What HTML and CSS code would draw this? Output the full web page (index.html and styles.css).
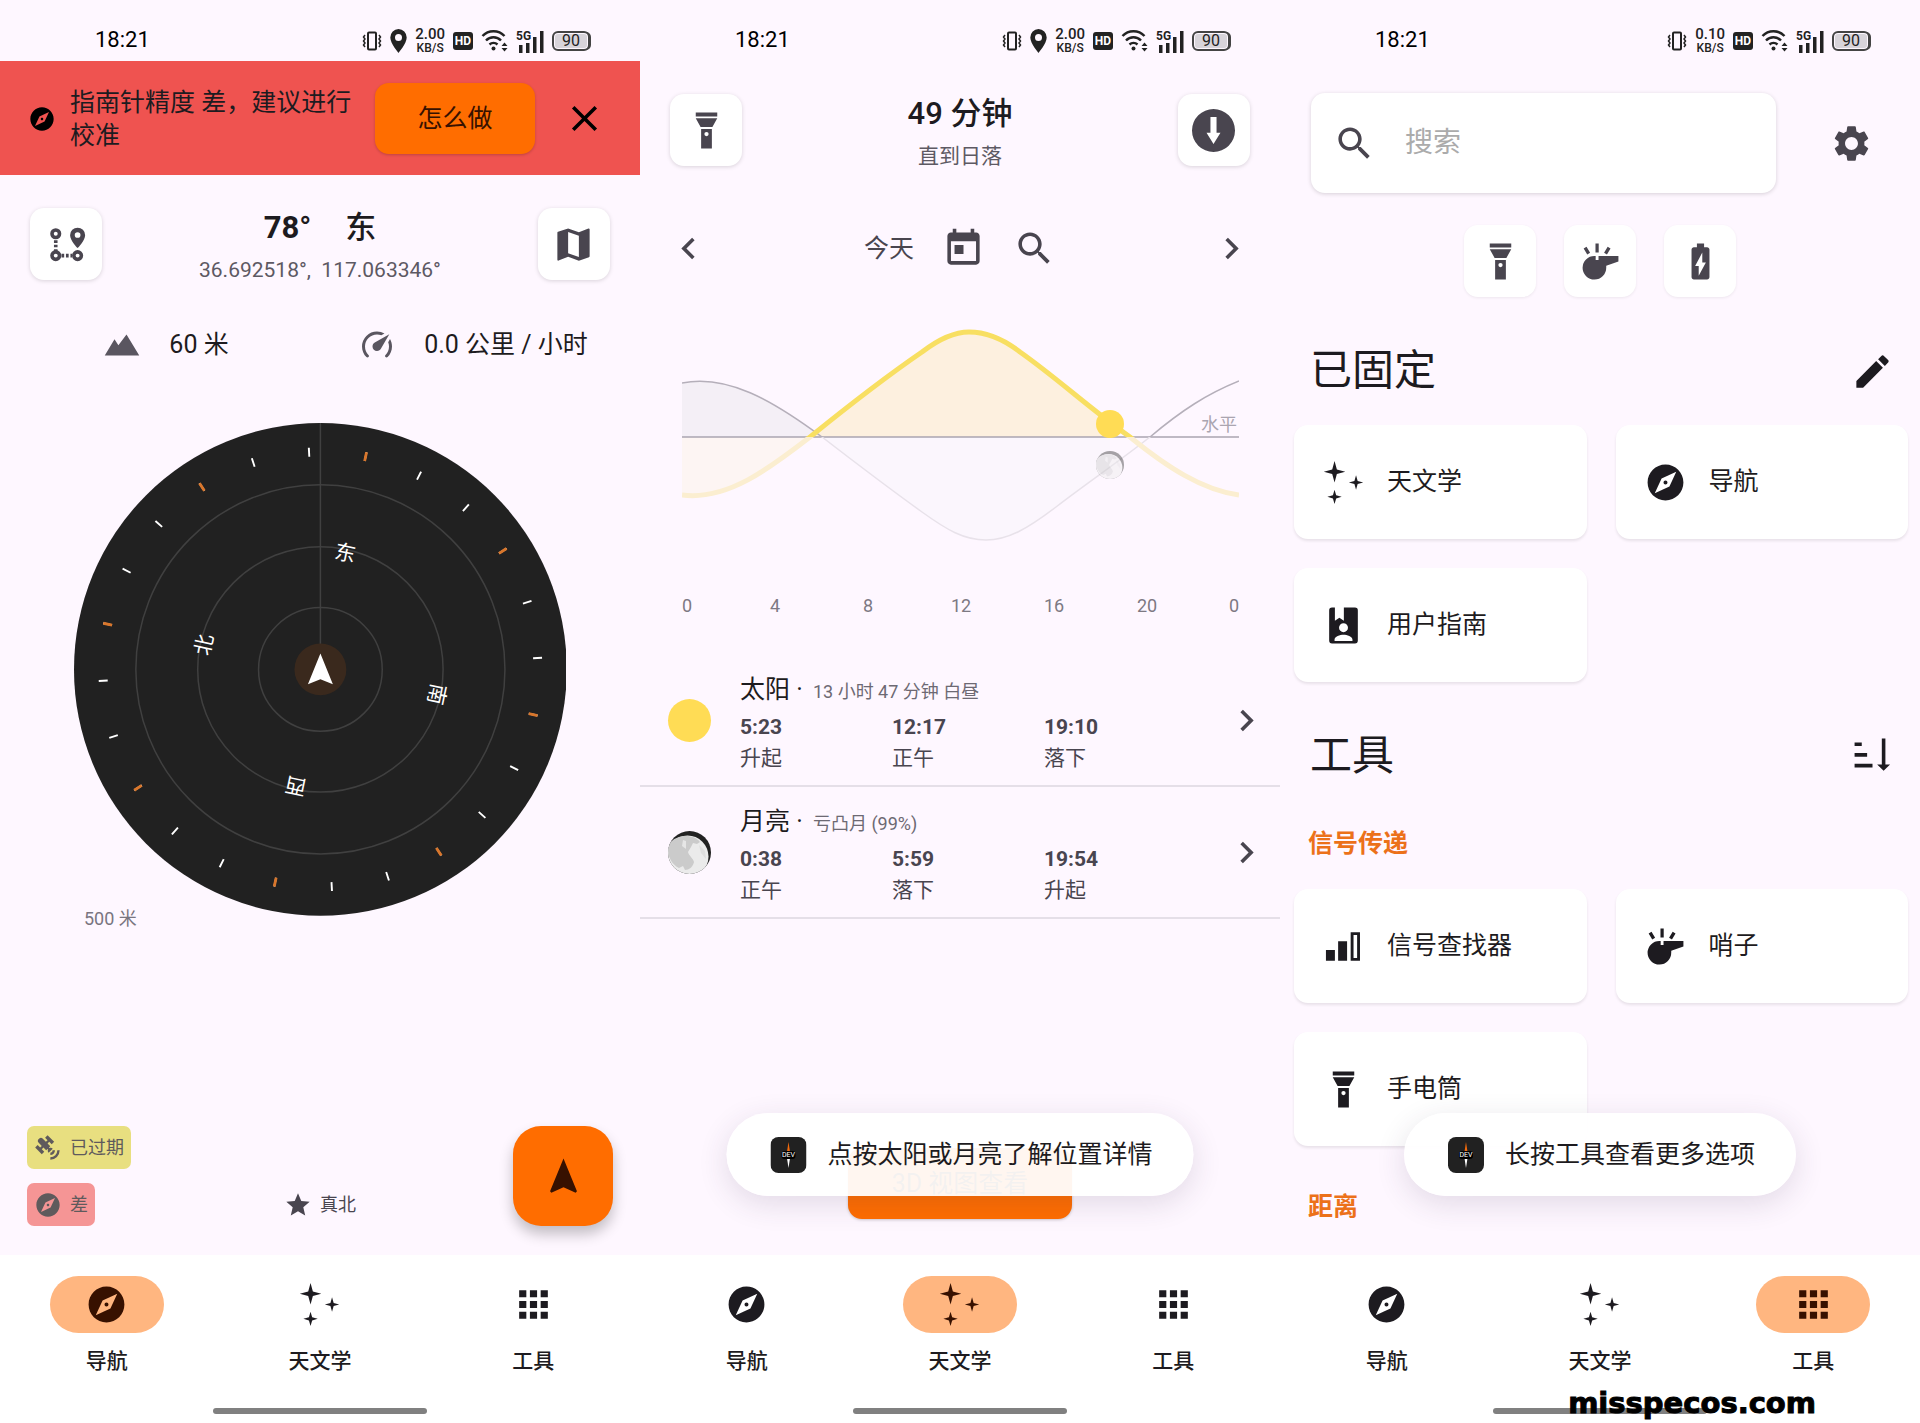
FILE: index.html
```html
<!DOCTYPE html>
<html lang="zh-CN">
<head>
    <meta charset="UTF-8">
    <title>导航</title>
    <link rel="stylesheet" href="styles.css">
</head>
<body>
<!-- 图标 -->
<svg class="sprite" aria-hidden="true">
    <symbol id="i-compass" viewBox="0 0 24 24"><path d="M12 10.9c-.61 0-1.1.49-1.1 1.1s.49 1.1 1.1 1.1c.61 0 1.1-.49 1.1-1.1s-.49-1.1-1.1-1.1zM12 2C6.48 2 2 6.48 2 12s4.48 10 10 10 10-4.48 10-10S17.52 2 12 2zm2.19 12.19L6 18l3.81-8.19L18 6l-3.81 8.19z"/></symbol>
    <symbol id="i-stars" viewBox="0 0 24 24"><path d="M7 0l1.3 4.7L13 6 8.3 7.3 7 12 5.7 7.3 1 6l4.7-1.3zM19 8l.9 3.1L23 12l-3.1.9L19 16l-.9-3.1L15 12l3.1-.9zM7 16l.9 3.1L11 20l-3.1.9L7 24l-.9-3.1L3 20l3.1-.9z"/></symbol>
    <symbol id="i-apps" viewBox="0 0 24 24"><path d="M4 8h4V4H4v4zm6 12h4v-4h-4v4zm-6 0h4v-4H4v4zm0-6h4v-4H4v4zm6 0h4v-4h-4v4zm6-10v4h4V4h-4zm-6 4h4V4h-4v4zm6 6h4v-4h-4v4zm0 6h4v-4h-4v4z"/></symbol>
    <symbol id="i-close" viewBox="0 0 24 24"><path d="M19 6.41L17.59 5 12 10.59 6.41 5 5 6.41 10.59 12 5 17.59 6.41 19 12 13.41 17.59 19 19 17.59 13.41 12z"/></symbol>
    <symbol id="i-map" viewBox="0 0 24 24"><path d="M20.5 3l-.16.03L15 5.1 9 3 3.36 4.9c-.21.07-.36.25-.36.48V20.5c0 .28.22.5.5.5l.16-.03L9 18.9l6 2.1 5.64-1.9c.21-.07.36-.25.36-.48V3.5c0-.28-.22-.5-.5-.5zM15 19l-6-2.11V5l6 2.11V19z"/></symbol>
    <symbol id="i-route" viewBox="0 0 24 24">
        <g fill="none" stroke="currentColor" stroke-width="2"><circle cx="6" cy="6" r="2.1"/><circle cx="6" cy="18.2" r="2.1"/><circle cx="18.2" cy="18.2" r="2.1"/><path d="M6 9.6v6M9.2 18.2h6" stroke-dasharray="1.5 1"/></g>
        <path fill-rule="evenodd" d="M18.2 2.6a4.2 4.2 0 0 0-4.2 4.2c0 3 4.2 7.2 4.2 7.2s4.2-4.2 4.2-7.2a4.2 4.2 0 0 0-4.2-4.2zm0 5.7a1.6 1.6 0 1 1 0-3.2 1.6 1.6 0 0 1 0 3.2z"/>
    </symbol>
    <symbol id="i-mountain" viewBox="0 0 24 24"><path d="M.5 19L7 8.2l2.6 3.9L15 5l8.5 14z"/></symbol>
    <symbol id="i-speed" viewBox="0 0 24 24"><path d="M12,16A3,3 0 0,1 9,13C9,11.88 9.61,10.9 10.5,10.39L20.21,4.77L14.68,14.35C14.18,15.33 13.17,16 12,16M12,3C13.81,3 15.5,3.5 16.97,4.32L14.87,5.53C14,5.19 13,5 12,5A8,8 0 0,0 4,13C4,15.21 4.89,17.21 6.34,18.65H6.35C6.74,19.04 6.74,19.67 6.35,20.06C5.96,20.45 5.32,20.45 4.93,20.07V20.07C3.12,18.26 2,15.76 2,13A10,10 0 0,1 12,3M22,13C22,15.76 20.88,18.26 19.07,20.07V20.07C18.68,20.45 18.05,20.45 17.66,20.06C17.27,19.67 17.27,19.04 17.66,18.65V18.65C19.11,17.2 20,15.21 20,13C20,12 19.81,11 19.46,10.1L20.67,8C21.5,9.5 22,11.18 22,13Z"/></symbol>
    <symbol id="i-satellite" viewBox="0 0 24 24"><path d="M11.62,1L17.28,6.67L15.16,8.79L13.04,6.67L11.62,8.09L13.95,10.41L12.79,11.58L13.24,12.04C14.17,11.61 15.31,11.77 16.07,12.54L12.54,16.07C11.77,15.31 11.61,14.17 12.04,13.24L11.58,12.79L10.41,13.95L8.09,11.62L6.67,13.04L8.79,15.16L6.67,17.28L1,11.62L3.14,9.5L5.26,11.62L6.67,10.21L3.84,7.38C3.06,6.6 3.06,5.33 3.84,4.55L4.55,3.84C5.33,3.06 6.6,3.06 7.38,3.84L10.21,6.67L11.62,5.26L9.5,3.14L11.62,1M18,14A4,4 0 0,1 14,18V16A2,2 0 0,0 16,14H18M22,14A8,8 0 0,1 14,22V20A6,6 0 0,0 20,14H22Z"/></symbol>
    <symbol id="i-star" viewBox="0 0 24 24"><path d="M12 17.27L18.18 21l-1.64-7.03L22 9.24l-7.19-.61L12 2 9.19 8.63 2 9.24l5.46 4.73L5.82 21z"/></symbol>
    <symbol id="i-arrow" viewBox="0 0 24 24"><path d="M12 2L4.5 20.29l.71.71L12 18l6.79 3 .71-.71z"/></symbol>
    <symbol id="i-torch" viewBox="0 0 24 24"><path fill-rule="evenodd" d="M6 2h12v2.200H6zM6 5.100h12L15.300 10H8.700zM9 11.200h6V22H9zm3 1.600a1.200 1.200 0 1 0 0 2.400 1.200 1.200 0 0 0 0-2.400z"/></symbol>
    <symbol id="i-down" viewBox="0 0 24 24"><path fill-rule="evenodd" d="M12 0a12 12 0 1 0 0 24 12 12 0 0 0 0-24zm-1.700 4.500h3.400v8.800h2.200L12 19.500l-3.900-6.200h2.200z"/></symbol>
    <symbol id="i-prev" viewBox="0 0 24 24"><path d="M15.41 7.41L14 6l-6 6 6 6 1.41-1.41L10.83 12z"/></symbol>
    <symbol id="i-next" viewBox="0 0 24 24"><path d="M10 6L8.59 7.41 13.17 12l-4.58 4.59L10 18l6-6z"/></symbol>
    <symbol id="i-today" viewBox="0 0 24 24"><path d="M19 3h-1V1h-2v2H8V1H6v2H5c-1.11 0-1.99.9-1.99 2L3 19c0 1.1.89 2 2 2h14c1.1 0 2-.9 2-2V5c0-1.1-.9-2-2-2zm0 16H5V8h14v11zM7 10h5v5H7v-5z"/></symbol>
    <symbol id="i-search" viewBox="0 0 24 24"><path d="M15.5 14h-.79l-.28-.27C15.41 12.59 16 11.11 16 9.5 16 5.91 13.09 3 9.5 3S3 5.91 3 9.5 5.91 16 9.5 16c1.61 0 3.09-.59 4.23-1.57l.27.28v.79l5 4.99L20.49 19l-4.99-5zm-6 0C7.01 14 5 11.99 5 9.5S7.01 5 9.5 5 14 7.01 14 9.5 11.99 14 9.5 14z"/></symbol>
    <symbol id="i-settings" viewBox="0 0 24 24"><path d="M19.14 12.94c.04-.3.06-.61.06-.94 0-.32-.02-.64-.07-.94l2.03-1.58c.18-.14.23-.41.12-.61l-1.92-3.32c-.12-.22-.37-.29-.59-.22l-2.39.96c-.5-.38-1.03-.7-1.62-.94l-.36-2.54c-.04-.24-.24-.41-.48-.41h-3.84c-.24 0-.43.17-.47.41l-.36 2.54c-.59.24-1.13.57-1.62.94l-2.39-.96c-.22-.08-.47 0-.59.22L2.74 8.87c-.12.21-.08.47.12.61l2.03 1.58c-.05.3-.09.63-.09.94s.02.64.07.94l-2.03 1.58c-.18.14-.23.41-.12.61l1.92 3.32c.12.22.37.29.59.22l2.39-.96c.5.38 1.03.7 1.62.94l.36 2.54c.05.24.24.41.48.41h3.84c.24 0 .44-.17.47-.41l.36-2.54c.59-.24 1.13-.56 1.62-.94l2.39.96c.22.08.47 0 .59-.22l1.92-3.32c.12-.22.07-.47-.12-.61l-2.01-1.58zM12 15.6c-1.98 0-3.6-1.62-3.6-3.6s1.62-3.6 3.6-3.6 3.6 1.62 3.6 3.6-1.62 3.6-3.6 3.6z"/></symbol>
    <symbol id="i-whistle" viewBox="0 0 24 24"><path d="M8.600 8.900V8.900H9.300V11.200H10.900V8.900H22v3.100l-6.800 2.400v1A6.600 6.600 0 1 1 8.600 8.900zM9.200 2h1.800v5H9.200zM2.600 4.800l1.600-1 2 3.300-1.600 1zM16 3.800l1.600 1-2 3.300-1.600-1z"/></symbol>
    <symbol id="i-battery" viewBox="0 0 24 24"><path d="M15.67 4H14V2h-4v2H8.33C7.6 4 7 4.6 7 5.33v15.33C7 21.4 7.6 22 8.33 22h7.33c.74 0 1.34-.6 1.34-1.33V5.33C17 4.6 16.4 4 15.67 4zM11 20v-5.5H9L13 7v5.5h2L11 20z"/></symbol>
    <symbol id="i-edit" viewBox="0 0 24 24"><path d="M3 17.25V21h3.75L17.81 9.94l-3.75-3.75L3 17.25zM20.71 7.04c.39-.39.39-1.02 0-1.41l-2.34-2.34c-.39-.39-1.02-.39-1.41 0l-1.83 1.83 3.75 3.75 1.83-1.83z"/></symbol>
    <symbol id="i-sort" viewBox="0 0 24 24"><path d="M2 4.200h4v2H2zM2 10.100h7v2H2zM2 16.100h10v2H2zM17.200 2h2v14.400h2.600L18.200 20l-3.600-3.600h2.600z"/></symbol>
    <symbol id="i-guide" viewBox="0 0 24 24"><path fill-rule="evenodd" d="M5.600 2h1.600v7.300l2.500-1.600 2.500 1.600V2h6.200A1.600 1.600 0 0 1 20 3.600v16.800a1.600 1.600 0 0 1-1.600 1.600H5.600A1.600 1.600 0 0 1 4 20.400V3.600A1.600 1.600 0 0 1 5.600 2zM12 10.700a2.500 2.500 0 1 0 0 5 2.500 2.500 0 0 0 0-5zM7 20.700h10v-.9c0-1.800-3-2.700-5-2.700s-5 .9-5 2.700z"/></symbol>
    <symbol id="i-signal" viewBox="0 0 24 24"><path fill-rule="evenodd" d="M2.200 14h5v6h-5zM9 9h5v11H9zM16 4h5.200v16H16zm1.600 1.600v12.800h2V5.600z"/></symbol>
    <symbol id="i-moon" viewBox="0 0 43 43">
        <clipPath id="disc"><circle cx="21.500" cy="21.500" r="21.500"/></clipPath>
        <g clip-path="url(#disc)">
            <path d="M0 0h43v43H0z" fill="#222"/>
            <circle cx="19.500" cy="25.500" r="21" fill="#ebebeb"/>
            <path d="M0 14C5 7 12 5 18 5c6 0 11 2 14 6l-3 2-4-1-2 4-3 5c1 4 5 6 6 10-1 5-5 8-9 8l-2-4-4 2C3 33 -1 24 0 14z" fill="#cbcbcb"/>
            <path d="M15 9l3 1 0 8-4-3z" fill="#e6e6e6"/>
            <path d="M31 14l6 6 1 8-5-6z" fill="#dedede"/>
        </g>
    </symbol>
    <symbol id="i-vibrate" viewBox="0 0 20 20"><g fill="none" stroke="currentColor"><rect x="6" y="1.500" width="8" height="17" rx="1" stroke-width="2"/><path stroke-width="1.500" d="M3 4L1.500 6 3 8 1.500 10 3 12l-1.500 2L3 16M17 4l1.500 2L17 8l1.500 2-1.500 2 1.500 2L17 16"/></g></symbol>
    <symbol id="i-pin" viewBox="0 0 17 24"><path fill-rule="evenodd" d="M8.500 0A8.200 8.600 0 0 0 .3 8.600C.3 14.500 8.500 24 8.500 24s8.200-9.500 8.200-15.400A8.200 8.600 0 0 0 8.500 0zm0 12a3.500 3.500 0 1 1 0-7 3.500 3.500 0 0 1 0 7z"/></symbol>
    <symbol id="i-wifi" viewBox="0 0 27 22"><g fill="none" stroke="currentColor" stroke-width="2.500"><path d="M1.500 6.500a15 15 0 0 1 22 0M5 11a10.500 10.500 0 0 1 15 0M8.500 15a6 6 0 0 1 8 0"/></g><circle cx="12.500" cy="19" r="2"/><path d="M23.500 13l3 3.500h-6zM23.500 22l3-3.500h-6z"/></symbol>
</svg>

<div class="screens">

    <!-- 导航 -->
    <section class="screen">
        <div class="status">
            <span class="clock">18:21</span>
            <div class="status-icons">
                <svg class="s20"><use href="#i-vibrate"/></svg>
                <svg class="s-pin"><use href="#i-pin"/></svg>
                <span class="rate"><b>2.00</b><b>KB/S</b></span>
                <span class="hd">HD</span>
                <svg class="s-wifi"><use href="#i-wifi"/></svg>
                <svg class="s-5g" viewBox="0 0 28 24"><path d="M3 16h3.500v8H3zM10 14h3.500v10H10zM17 8h3.500v16H17zM24 2h3.500v22H24z"/><text x="0" y="11" class="g5">5G</text></svg>
                <span class="battery">90</span>
            </div>
        </div>
        <main class="main">
            <div class="banner">
                <svg class="icon-s"><use href="#i-compass"/></svg>
                <p class="banner-text">指南针精度 差，建议进行校准</p>
                <button class="btn">怎么做</button>
                <button class="close" aria-label="关闭"><svg class="icon"><use href="#i-close"/></svg></button>
            </div>
            <div class="head">
                <button class="tile" aria-label="路径"><svg class="icon"><use href="#i-route"/></svg></button>
                <div class="head-text">
                    <h1 class="title bearing"><span>78°</span><span>东</span></h1>
                    <p class="subtitle">36.692518°,&nbsp; 117.063346°</p>
                </div>
                <button class="tile" aria-label="地图"><svg class="icon"><use href="#i-map"/></svg></button>
            </div>
            <div class="stats">
                <div class="stat"><svg class="icon-m"><use href="#i-mountain"/></svg>60 米</div>
                <div class="stat"><svg class="icon-m"><use href="#i-speed"/></svg>0.0 公里 / 小时</div>
            </div>
            <svg class="compass" viewBox="0 0 494 494">
                <circle cx="247" cy="247" r="247" fill="#212121"/>
                <g class="ring"><circle cx="247" cy="247" r="62"/><circle cx="247" cy="247" r="123"/><circle cx="247" cy="247" r="185"/><path d="M247 0v232"/></g>
                <!-- 每 15° 一个刻度，每 45° 一个橙色刻度 -->
                <g fill="none" stroke-width="9" transform="rotate(12 247 247)">
                    <circle cx="247" cy="247" r="218" pathLength="1440" stroke="#fff" stroke-dasharray="2 58" stroke-dashoffset="1"/>
                    <circle cx="247" cy="247" r="218" pathLength="1440" stroke="#d9762b" stroke-dasharray="3 177" stroke-dashoffset="1.5"/>
                </g>
                <circle cx="247" cy="247" r="26" fill="#3a291d"/>
                <path d="M247 231l12.500 31-12.500-5-12.500 5z" fill="#fff"/>
                <g class="dirs">
                    <text x="247" y="135" transform="rotate(12 247 247)">东</text>
                    <text x="247" y="135" transform="rotate(102 247 247)">南</text>
                    <text x="247" y="135" transform="rotate(192 247 247)">西</text>
                    <text x="247" y="135" transform="rotate(282 247 247)">北</text>
                </g>
            </svg>
            <p class="scale">500 米</p>
            <div class="foot">
                <div class="chips">
                    <span class="chip chip-yellow"><svg class="icon-s"><use href="#i-satellite"/></svg>已过期</span>
                    <span class="chip chip-red"><svg class="icon-s"><use href="#i-compass"/></svg>差</span>
                </div>
                <span class="north"><svg class="icon-s"><use href="#i-star"/></svg>真北</span>
                <button class="fab" aria-label="导航到"><svg class="icon"><use href="#i-arrow"/></svg></button>
            </div>
        </main>
        <nav class="nav">
            <div class="nav-items">
                <a href="#" class="nav-item nav-selected"><span class="pill"><svg class="icon"><use href="#i-compass"/></svg></span>导航</a>
                <a href="#" class="nav-item"><span class="pill"><svg class="icon"><use href="#i-stars"/></svg></span>天文学</a>
                <a href="#" class="nav-item"><span class="pill"><svg class="icon"><use href="#i-apps"/></svg></span>工具</a>
            </div>
            <div class="home-bar"></div>
        </nav>
    </section>

    <!-- 天文学 -->
    <section class="screen">
        <div class="status">
            <span class="clock">18:21</span>
            <div class="status-icons">
                <svg class="s20"><use href="#i-vibrate"/></svg>
                <svg class="s-pin"><use href="#i-pin"/></svg>
                <span class="rate"><b>2.00</b><b>KB/S</b></span>
                <span class="hd">HD</span>
                <svg class="s-wifi"><use href="#i-wifi"/></svg>
                <svg class="s-5g" viewBox="0 0 28 24"><path d="M3 16h3.500v8H3zM10 14h3.500v10H10zM17 8h3.500v16H17zM24 2h3.500v22H24z"/><text x="0" y="11" class="g5">5G</text></svg>
                <span class="battery">90</span>
            </div>
        </div>
        <main class="main">
            <div class="head">
                <button class="tile" aria-label="手电筒"><svg class="icon"><use href="#i-torch"/></svg></button>
                <div class="head-text">
                    <h1 class="title">49 分钟</h1>
                    <p class="subtitle">直到日落</p>
                </div>
                <button class="tile" aria-label="落下"><svg class="icon"><use href="#i-down"/></svg></button>
            </div>
            <div class="date-row">
                <button aria-label="前一天"><svg class="icon"><use href="#i-prev"/></svg></button>
                <div class="date">
                    <span>今天</span>
                    <button aria-label="选择日期"><svg class="icon"><use href="#i-today"/></svg></button>
                    <button aria-label="查找"><svg class="icon"><use href="#i-search"/></svg></button>
                </div>
                <button aria-label="后一天"><svg class="icon"><use href="#i-next"/></svg></button>
            </div>
            <svg class="chart" viewBox="0 0 557 300">
                <defs>
                    <clipPath id="above"><rect x="0" y="0" width="557" height="117"/></clipPath>
                    <clipPath id="below"><rect x="0" y="117" width="557" height="120"/></clipPath>
                    <clipPath id="above-past"><rect x="0" y="0" width="428" height="117"/></clipPath>
                    <clipPath id="below-past"><rect x="0" y="117" width="428" height="120"/></clipPath>
                    <path id="sun" d="M0 175C45 181 88 148 128 117C165 87 205 56 240 32C257 19 272 12 287 12C302 12 320 18 338 32C375 58 407 88 448 117C485 147 520 170 557 175"/>
                    <path id="moon" d="M0 63C45 54 90 80 140 117C175 144 205 167 240 192C265 210 282 220 304 220C326 220 345 209 374 187C405 163 435 143 468 117C500 90 525 74 557 61"/>
                </defs>
                <path d="M0 117V63C45 54 90 80 140 117z" fill="#f4eff6"/>
                <path clip-path="url(#below-past)" d="M140 117C175 144 205 167 240 192C265 210 282 220 304 220C326 220 345 209 374 187C405 163 435 143 468 117z" fill="#fbf6fd"/>
                <path d="M0 117V175C45 181 88 148 128 117z" fill="#fdf5f3"/>
                <path clip-path="url(#above-past)" d="M128 117C165 87 205 56 240 32C257 19 272 12 287 12C302 12 320 18 338 32C375 58 407 88 448 117z" fill="#fdf0df"/>
                <path d="M0 117h557" stroke="#aaa4b0" stroke-width="1.500"/>
                <g fill="none" stroke-width="1.500">
                    <use href="#moon" clip-path="url(#above)" stroke="#b5afba"/>
                    <use href="#moon" clip-path="url(#below)" stroke="#e8e2ea"/>
                </g>
                <g fill="none" stroke-width="5">
                    <use href="#sun" clip-path="url(#above)" stroke="#f8df62"/>
                    <use href="#sun" clip-path="url(#below)" stroke="#fbeed0"/>
                </g>
                <circle cx="428" cy="104" r="14" fill="#ffdc55"/>
                <use href="#i-moon" x="414" y="131" width="28" height="28" opacity=".4"/>
                <g class="axis">
                    <text x="555" y="111" class="horizon">水平</text>
                    <text x="0" y="292">0</text>
                    <text x="93" y="292" class="mid">4</text>
                    <text x="186" y="292" class="mid">8</text>
                    <text x="279" y="292" class="mid">12</text>
                    <text x="372" y="292" class="mid">16</text>
                    <text x="465" y="292" class="mid">20</text>
                    <text x="557" y="292" class="end">0</text>
                </g>
            </svg>
            <div class="list">
                <a href="#" class="row">
                    <span class="sun"></span>
                    <div class="row-body">
                        <p class="row-title">太阳 · <small>13 小时 47 分钟 白昼</small></p>
                        <div class="times">
                            <span><b>5:23</b>升起</span>
                            <span><b>12:17</b>正午</span>
                            <span><b>19:10</b>落下</span>
                        </div>
                    </div>
                    <svg class="icon"><use href="#i-next"/></svg>
                </a>
                <a href="#" class="row">
                    <svg class="icon"><use href="#i-moon"/></svg>
                    <div class="row-body">
                        <p class="row-title">月亮 · <small>亏凸月 (99%)</small></p>
                        <div class="times">
                            <span><b>0:38</b>正午</span>
                            <span><b>5:59</b>落下</span>
                            <span><b>19:54</b>升起</span>
                        </div>
                    </div>
                    <svg class="icon"><use href="#i-next"/></svg>
                </a>
            </div>
            <button class="btn btn-3d">3D 视图查看</button>
            <div class="toast">
                <svg class="icon-m" viewBox="0 0 36 36"><rect width="36" height="36" rx="8" fill="#212121"/><path d="M18 5l2 13h-4z" fill="#f26a0c"/><path d="M18 31l2-13h-4z" fill="#fff"/><rect x="11" y="14" width="14" height="8" rx="3" fill="#000"/><text x="18" y="20" class="dev">DEV</text></svg>
                点按太阳或月亮了解位置详情
            </div>
        </main>
        <nav class="nav">
            <div class="nav-items">
                <a href="#" class="nav-item"><span class="pill"><svg class="icon"><use href="#i-compass"/></svg></span>导航</a>
                <a href="#" class="nav-item nav-selected"><span class="pill"><svg class="icon"><use href="#i-stars"/></svg></span>天文学</a>
                <a href="#" class="nav-item"><span class="pill"><svg class="icon"><use href="#i-apps"/></svg></span>工具</a>
            </div>
            <div class="home-bar"></div>
        </nav>
    </section>

    <!-- 工具 -->
    <section class="screen">
        <div class="status">
            <span class="clock">18:21</span>
            <div class="status-icons">
                <svg class="s20"><use href="#i-vibrate"/></svg>
                <span class="rate"><b>0.10</b><b>KB/S</b></span>
                <span class="hd">HD</span>
                <svg class="s-wifi"><use href="#i-wifi"/></svg>
                <svg class="s-5g" viewBox="0 0 28 24"><path d="M3 16h3.500v8H3zM10 14h3.500v10H10zM17 8h3.500v16H17zM24 2h3.500v22H24z"/><text x="0" y="11" class="g5">5G</text></svg>
                <span class="battery">90</span>
            </div>
        </div>
        <main class="main">
            <div class="search-row">
                <label class="search">
                    <svg class="icon"><use href="#i-search"/></svg>
                    <input type="text" placeholder="搜索" aria-label="搜索">
                </label>
                <button class="settings" aria-label="设置"><svg class="icon"><use href="#i-settings"/></svg></button>
            </div>
            <div class="quick">
                <button class="tile" aria-label="手电筒"><svg class="icon"><use href="#i-torch"/></svg></button>
                <button class="tile" aria-label="哨子"><svg class="icon"><use href="#i-whistle"/></svg></button>
                <button class="tile" aria-label="电池"><svg class="icon"><use href="#i-battery"/></svg></button>
            </div>
            <div class="section">
                <h2>已固定</h2>
                <button aria-label="编辑"><svg class="icon"><use href="#i-edit"/></svg></button>
            </div>
            <div class="cards">
                <a href="#" class="card"><svg class="icon"><use href="#i-stars"/></svg>天文学</a>
                <a href="#" class="card"><svg class="icon"><use href="#i-compass"/></svg>导航</a>
                <a href="#" class="card"><svg class="icon"><use href="#i-guide"/></svg>用户指南</a>
            </div>
            <div class="section">
                <h2>工具</h2>
                <button aria-label="排序"><svg class="icon"><use href="#i-sort"/></svg></button>
            </div>
            <h3 class="group">信号传递</h3>
            <div class="cards">
                <a href="#" class="card"><svg class="icon"><use href="#i-signal"/></svg>信号查找器</a>
                <a href="#" class="card"><svg class="icon"><use href="#i-whistle"/></svg>哨子</a>
                <a href="#" class="card"><svg class="icon"><use href="#i-torch"/></svg>手电筒</a>
            </div>
            <h3 class="group">距离</h3>
            <div class="toast">
                <svg class="icon-m" viewBox="0 0 36 36"><rect width="36" height="36" rx="8" fill="#212121"/><path d="M18 5l2 13h-4z" fill="#f26a0c"/><path d="M18 31l2-13h-4z" fill="#fff"/><rect x="11" y="14" width="14" height="8" rx="3" fill="#000"/><text x="18" y="20" class="dev">DEV</text></svg>
                长按工具查看更多选项
            </div>
        </main>
        <nav class="nav">
            <div class="nav-items">
                <a href="#" class="nav-item"><span class="pill"><svg class="icon"><use href="#i-compass"/></svg></span>导航</a>
                <a href="#" class="nav-item"><span class="pill"><svg class="icon"><use href="#i-stars"/></svg></span>天文学</a>
                <a href="#" class="nav-item nav-selected"><span class="pill"><svg class="icon"><use href="#i-apps"/></svg></span>工具</a>
            </div>
            <div class="home-bar"></div>
            <span class="site">misspecos.com</span>
        </nav>
    </section>

</div>
</body>
</html>
```
FILE: styles.css
```css
*{
    margin:0;
    padding:0;
    box-sizing: border-box;
}
body{
    font-family: Roboto, "Noto Sans CJK SC", sans-serif;
    font-size: 25px;
    line-height: 1.2;
    color: #1d1b20;
    background-color: #fef7ff;
}
button,input{
    font: inherit;
    color: inherit;
    border: 0;
    background: none;
}
button{
    cursor: pointer;
}
a{
    color: inherit;
    text-decoration: none;
}
svg{
    display: block;
    flex: none;
    fill: currentColor;
}
.sprite{
    position: absolute;
    width: 0;
    height: 0;
}
.icon{
    width: 43px;
    height: 43px;
}
.icon-m{
    width: 36px;
    height: 36px;
}
.icon-s{
    width: 28px;
    height: 28px;
}
.screens{
    display: grid;
    grid-template-columns: repeat(3, minmax(0, 1fr));
}
.screen{
    display: flex;
    flex-direction: column;
    min-height: 100vh;
}
.main{
    flex: 1;
    display: flex;
    flex-direction: column;
    position: relative;
}

/* 状态栏 */
.status{
    display: flex;
    justify-content: space-between;
    align-items: center;
    height: 61px;
    padding: 20px 48px 0 95px;
    color: #000;
}
.clock{
    font-size: 22px;
}
.status-icons{
    display: flex;
    align-items: center;
    gap: 8px;
    color: #222;
}
.s20{
    width: 20px;
    height: 20px;
}
.s-pin{
    width: 17px;
    height: 24px;
}
.s-wifi{
    width: 27px;
    height: 23px;
}
.s-5g{
    width: 28px;
    height: 24px;
}
.g5{
    font-size: 12px;
    font-weight: bold;
}
.rate b{
    display: block;
    font-size: 12px;
    line-height: 13px;
    font-weight: 500;
    text-align: center;
}
.rate b:first-child{
    font-size: 15px;
    line-height: 16px;
}
.hd{
    width: 20px;
    font-size: 12px;
    line-height: 18px;
    font-weight: bold;
    text-align: center;
    color: #fff;
    background-color: #222;
    border-radius: 3px;
}
.battery{
    width: 38px;
    margin-right: 2px;
    font-size: 16px;
    line-height: 16px;
    text-align: center;
    background-color: #d8d4da;
    border: 2px solid #444;
    border-radius: 6px;
    box-shadow: inset 0 0 0 1px #fef7ff, 2px 0 0 -1px #444;
}

/* 提示条 */
.banner{
    display: flex;
    align-items: center;
    gap: 14px;
    padding: 22px 20px 21px 28px;
    background-color: #ef5350;
}
.banner svg{
    color: #000;
}
.banner-text{
    flex: 1;
    line-height: 33px;
}
.btn{
    width: 160px;
    height: 71px;
    color: #371100;
    background-color: #ff6d00;
    border-radius: 14px;
    box-shadow: 0 1px 3px rgba(0,0,0,.2);
}
.close{
    width: 71px;
    display: flex;
    justify-content: center;
}

.head{
    display: flex;
    justify-content: space-between;
    align-items: flex-start;
    padding: 33px 30px 0;
}
.tile{
    width: 72px;
    height: 72px;
    display: flex;
    justify-content: center;
    align-items: center;
    color: #49454f;
    background-color: #fff;
    border-radius: 14px;
    box-shadow: 0 1px 4px rgba(0,0,0,.15);
}
.head-text{
    text-align: center;
}
.title{
    font-size: 31px;
    line-height: 40px;
    font-weight: 500;
}
.bearing{
    display: flex;
    justify-content: center;
    gap: 34px;
}
.bearing span:first-child{
    font-weight: 700;
}
.subtitle{
    margin-top: 8px;
    font-size: 21px;
    line-height: 28px;
    color: #5d5963;
}
.stats{
    display: grid;
    grid-template-columns: 1fr 1fr;
    padding: 0 13px;
    margin-top: 43px;
}
.stat{
    display: flex;
    justify-content: center;
    gap: 29px;
    line-height: 36px;
}
.stat svg{
    color: #5a5660;
}

/* 罗盘 */
.compass{
    width: 77%;
    margin: 60px auto 0;
}
.ring{
    fill: none;
    stroke: #404040;
    stroke-width: 1.5;
}
.dirs{
    font-size: 21px;
    fill: #fff;
    text-anchor: middle;
}
.scale{
    margin-top: -10px;
    padding-left: 84px;
    font-size: 18px;
    line-height: 26px;
    color: #79757f;
}
.foot{
    display: grid;
    grid-template-columns: 1fr auto 1fr;
    align-items: end;
    margin-top: auto;
    padding: 0 27px 29px;
    font-size: 18px;
}
.chips{
    display: flex;
    flex-direction: column;
    align-items: flex-start;
    gap: 14px;
}
.chip,.north{
    display: flex;
    align-items: center;
    gap: 8px;
    height: 43px;
    padding: 0 7px;
    line-height: 1;
    color: #5f5a5c;
    border-radius: 7px;
}
.chip-yellow{
    background-color: #e8df80;
}
.chip-red{
    background-color: #f59595;
}
.north{
    color: #49454f;
}
.fab{
    justify-self: end;
    display: flex;
    justify-content: center;
    align-items: center;
    width: 100px;
    height: 100px;
    color: #371100;
    background-color: #ff6d00;
    border-radius: 28px;
    box-shadow: 0 8px 14px rgba(0,0,0,.24);
}

/* 日期与曲线 */
.date-row,.date{
    display: flex;
    align-items: center;
    justify-content: space-between;
    color: #49454f;
}
.date-row{
    margin-top: 57px;
    padding: 0 27px;
}
.date{
    gap: 28px;
}
.chart{
    width: auto;
    margin: 50px 41px 0 42px;
}
.axis{
    font-size: 18px;
    fill: #7d7983;
}
.horizon{
    fill: #aaa5b0;
}
.mid{
    text-anchor: middle;
}
.end,.horizon{
    text-anchor: end;
}
.list{
    margin-top: 35px;
}
.row{
    display: flex;
    align-items: center;
    gap: 29px;
    padding: 11px 12px 11px 28px;
    color: #49454f;
    border-bottom: 2px solid #e5dfe8;
}
.sun{
    width: 43px;
    height: 43px;
    border-radius: 50%;
    background-color: #ffdc55;
}
.row-body{
    flex: 1;
    padding-top: 8px;
}
.row-title{
    margin-bottom: 6px;
    line-height: 32px;
    color: #1d1b20;
}
.row-title small{
    margin-left: 4px;
    font-size: 18px;
    line-height: 1;
    color: #6d6973;
}
.times{
    display: grid;
    grid-template-columns: repeat(3, 1fr);
    font-size: 21px;
    line-height: 31px;
}
.times b{
    display: block;
}
.btn-3d{
    width: 224px;
    margin: auto auto 36px;
}
.toast{
    position: absolute;
    left: 50%;
    bottom: 59px;
    transform: translateX(-50%);
    display: flex;
    align-items: center;
    gap: 21px;
    height: 83px;
    padding: 0 41px 0 44px;
    white-space: nowrap;
    background-color: rgba(255,255,255,.94);
    border-radius: 42px;
    box-shadow: 0 8px 30px rgba(60,40,80,.14);
}
.dev{
    font-size: 7px;
    text-anchor: middle;
    fill: #fff;
}

/* 工具 */
.search-row{
    display: flex;
    align-items: center;
    gap: 40px;
    padding: 32px 33px 0 31px;
}
.search{
    flex: 1;
    display: flex;
    align-items: center;
    gap: 29px;
    min-width: 0;
    height: 100px;
    padding: 0 22px;
    color: #49454f;
    background-color: #fff;
    border-radius: 14px;
    box-shadow: 0 1px 4px rgba(0,0,0,.16);
}
.search input{
    flex: 1;
    min-width: 0;
    font-size: 28px;
    outline: none;
}
.search input::placeholder{
    color: #ababab;
}
.settings{
    width: 71px;
    display: flex;
    justify-content: center;
    color: #49454f;
}
.quick{
    display: flex;
    justify-content: center;
    gap: 28px;
    margin-top: 32px;
}
.quick .tile{
    box-shadow: 0 1px 3px rgba(0,0,0,.07);
}
.section{
    display: flex;
    justify-content: space-between;
    align-items: center;
    margin: 46px 26px 26px 30px;
}
.section h2{
    font-size: 42px;
    line-height: 56px;
    font-weight: 400;
}
.cards{
    display: grid;
    grid-template-columns: 1fr 1fr;
    gap: 29px;
    padding: 0 12px 0 14px;
}
.card{
    display: flex;
    align-items: center;
    gap: 22px;
    height: 114px;
    padding: 0 28px;
    background-color: #fff;
    border-radius: 14px;
    box-shadow: 0 2px 3px rgba(0,0,0,.09);
}
.group{
    margin: 18px 28px 29px;
    font-size: 25px;
    line-height: 32px;
    font-weight: 700;
    color: #ec711a;
}
.cards + .group{
    margin-top: 45px;
}

/* 底部导航 */
.nav{
    position: relative;
    padding: 21px 0 9px;
    background-color: #fff;
}
.nav-items{
    display: grid;
    grid-template-columns: repeat(3, 1fr);
}
.nav-item{
    display: flex;
    flex-direction: column;
    align-items: center;
    gap: 14px;
    font-size: 21px;
    line-height: 28px;
    font-weight: 500;
}
.pill{
    display: flex;
    justify-content: center;
    align-items: center;
    width: 114px;
    height: 57px;
    border-radius: 29px;
}
.nav-selected .pill{
    color: #371100;
    background-color: #ffb680;
}
.home-bar{
    width: 214px;
    height: 6px;
    margin: 33px auto 0;
    border-radius: 3px;
    background-color: #808080;
}
.site{
    position: absolute;
    right: 104px;
    bottom: 2px;
    font-family: "DejaVu Sans", sans-serif;
    font-size: 29px;
    font-weight: bold;
    color: #000;
    -webkit-text-stroke: 1px #000;
}
```
